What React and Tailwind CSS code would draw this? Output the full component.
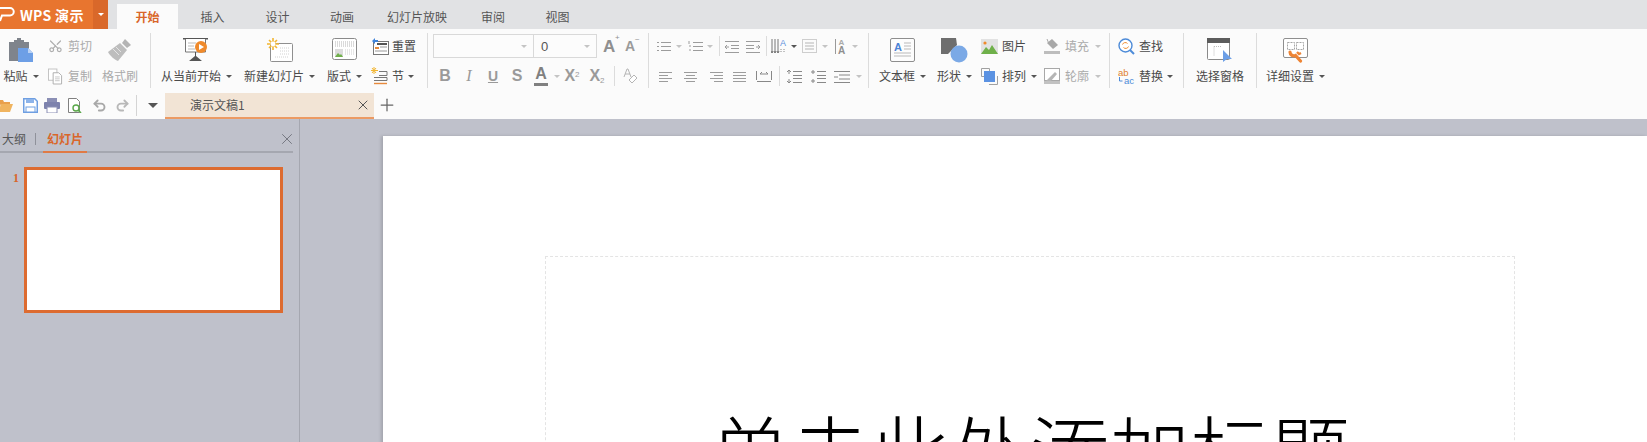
import { Plus, X, Scissors, Undo2, Redo2 } from 'lucide-react';

const CJK = { fontFamily: '"Noto Sans CJK SC", "Noto Sans", sans-serif' };
const SANS = { fontFamily: '"Liberation Sans", sans-serif' };

function Caret({ dim, className = '' }) {
  return (
    <span
      className={`inline-block w-0 h-0 border-x-[3px] border-x-transparent border-t-[3px] shrink-0 ${dim ? 'border-t-[#c4c4c4]' : 'border-t-[#555555]'} ${className}`}
    />
  );
}

function Sep() {
  return <div className="w-px h-[55px] mt-[4px] bg-[#dcdcdc] shrink-0" />;
}

function MiniSep({ className = '' }) {
  return <div className={`w-px h-[20px] bg-[#dcdcdc] shrink-0 ${className}`} />;
}

function Large({ icon, label, caret, className = '' }) {
  return (
    <div className={`flex flex-col items-center shrink-0 h-[56px] ${className}`}>
      <div className="h-[30px] pt-[5px] flex justify-center">{icon}</div>
      <div className="h-[26px] flex items-center whitespace-nowrap text-[#4a4a4a]">
        <span>{label}</span>
        {caret && <Caret className="ml-[5px]" />}
      </div>
    </div>
  );
}

function Small({ icon, label, caret, dim, gap = 'gap-[4px]' }) {
  return (
    <div className={`h-[26px] flex items-center whitespace-nowrap ${gap} ${dim ? 'text-[#aaaaaa]' : 'text-[#4a4a4a]'}`}>
      {icon}
      <span>{label}</span>
      {caret && <Caret dim={dim} className="ml-[1px]" />}
    </div>
  );
}

function Row({ children, className = '' }) {
  return <div className={`h-[26px] flex items-center ${className}`}>{children}</div>;
}

function Cell({ children, className = 'w-[24px]' }) {
  return <div className={`flex items-center justify-center shrink-0 ${className}`}>{children}</div>;
}

/* large ribbon icons */
const PasteIcon = () => (
  <svg width="26" height="24" viewBox="0 0 26 24" className="block">
    <path d="M1 4h5V2h3V0h4v2h3v2h5v9H10v10H1z" fill="#7f848c" />
    <path d="M10 10h10l5 5v9H10z" fill="#6d9fe6" />
    <path d="M20 10l5 5h-5z" fill="#b9d2f5" />
  </svg>
);

const BrushIcon = () => (
  <svg width="26" height="24" viewBox="0 0 26 24" className="block">
    <path d="M18 1l6 6-4 3-5-5z" fill="#b4b4b4" />
    <path d="M13 5l7 7-9 11c-3-1-8-5-10-9z" fill="#bdbdbd" />
    <path d="M6 11l6 6M9 9l5 5" stroke="#e4e4e4" strokeWidth="1" />
  </svg>
);

const PresentIcon = () => (
  <svg width="27" height="24" viewBox="0 0 27 24" className="block">
    <path d="M0 .5h25" stroke="#555" strokeWidth="2" />
    <path d="M2.5 1v13h20V1" fill="#fff" stroke="#777" />
    <path d="M5 5h8M5 8h6M5 11h7" stroke="#bbb" />
    <circle cx="18" cy="9" r="6" fill="#ef8a2c" />
    <path d="M16 6l5 3-5 3z" fill="#fff" />
    <path d="M12 14v4l-6 5h13l-6-5v-4z" fill="#555" />
  </svg>
);

const NewSlideIcon = () => (
  <svg width="26" height="24" viewBox="0 0 26 24" className="block">
    <rect x="3.5" y="5.5" width="22" height="18" rx="1" fill="#fff" stroke="#8f8f8f" />
    <path d="M13 10h9M13 13h9M13 16h9M8 19h14" stroke="#d2d2d2" strokeDasharray="1 1" />
    <path d="M6 0v12M0 6h12M2 2l8 8M10 2l-8 8" stroke="#f2b632" strokeWidth="1.6" />
    <circle cx="6" cy="6" r="2.4" fill="#fff" />
  </svg>
);

const LayoutIcon = () => (
  <svg width="25" height="23" viewBox="0 0 25 23" className="block">
    <rect x="0.5" y="0.5" width="24" height="21" rx="2" fill="#fff" stroke="#8a8a8a" />
    <path d="M3 4h19M3 6h19M3 8h19" stroke="#b5b5b5" strokeDasharray="1 1" />
    <path d="M13 12h9M13 14h9M13 16h9" stroke="#cfcfcf" strokeDasharray="1 1" />
    <rect x="3" y="11" width="8" height="8" fill="#dcdcdc" />
    <path d="M3 19l3-4 2 2 1-1 2 3z" fill="#6fb04a" />
  </svg>
);

const TextBoxIcon = () => (
  <svg width="25" height="24" viewBox="0 0 25 24" className="block">
    <rect x="0.5" y="0.5" width="24" height="23" rx="1.5" fill="#fdfdfd" stroke="#8e8e8e" />
    <text x="4" y="13" fontSize="11" fontWeight="700" fill="#4d84d6" fontFamily="Liberation Sans, sans-serif">A</text>
    <path d="M14 5h7M14 8h7M14 11h7M4 15h17M4 18h17" stroke="#b9b9b9" />
  </svg>
);

const ShapeIcon = () => (
  <svg width="27" height="25" viewBox="0 0 27 25" className="block">
    <path d="M0 0h15l1 7-9 9H0z" fill="#6e6e6e" />
    <circle cx="18" cy="16" r="8.5" fill="#7ba9e6" />
  </svg>
);

const PaneIcon = () => (
  <svg width="26" height="24" viewBox="0 0 26 24" className="block">
    <rect x="0.5" y="0.5" width="22" height="21" rx="1" fill="#fff" stroke="#8a8a8a" />
    <rect x="0" y="0" width="23" height="5" fill="#5c5c5c" />
    <path d="M7 8.5h8M7 8.5v10" stroke="#bdbdbd" strokeDasharray="1 1" />
    <path d="M16 12l9 9-5 0-4 3z" fill="#6d9fe6" />
  </svg>
);

const SettingsIcon = () => (
  <svg width="26" height="25" viewBox="0 0 26 25" className="block">
    <rect x="0.5" y="0.5" width="24" height="19" rx="1.5" fill="#fff" stroke="#8f8f8f" />
    <rect x="4.5" y="4.5" width="7" height="7" fill="#fff" stroke="#a5a5a5" strokeDasharray="2 1" />
    <rect x="13.5" y="4.5" width="7" height="7" fill="#fff" stroke="#a5a5a5" strokeDasharray="2 1" />
    <path d="M7 14c0 3 3 4.500 5.500 3.500l5 5.500" fill="none" stroke="#ee8434" strokeWidth="3.200" strokeLinecap="round" />
    <path d="M14 14l2 2 2-1" fill="none" stroke="#ee8434" strokeWidth="2.400" />
  </svg>
);

/* small ribbon icons */
const CopyIcon = () => (
  <svg width="16" height="17" viewBox="0 0 16 17" className="block">
    <rect x="0.5" y="0.5" width="9" height="12" fill="#fff" stroke="#c0c0c0" />
    <path d="M5.5 4.5h6l3 3v9h-9z" fill="#fff" stroke="#adadad" />
    <path d="M7.5 9h5M7.5 11h5M7.5 13h5" stroke="#c6c6c6" />
  </svg>
);

const ResetIcon = () => (
  <svg width="18" height="17" viewBox="0 0 18 17" className="block">
    <rect x="2.5" y="3.5" width="15" height="13" fill="#fff" stroke="#777" />
    <rect x="6" y="5" width="10" height="2" fill="#555" />
    <rect x="4" y="9" width="4" height="2" fill="#e78a3c" />
    <path d="M9 9h7M4 13h12" stroke="#999" />
    <path d="M4 0L1 3l3 3V4h3V2H4z" fill="#3f83d9" />
  </svg>
);

const SectionIcon = () => (
  <svg width="18" height="18" viewBox="0 0 18 18" className="block">
    <path d="M3 0v7M0 3.5h7M1 1l4 5M5 1L1 6" stroke="#f2b632" />
    <path d="M8 4.500h8v4H8M8 8.500h8" fill="none" stroke="#777" />
    <path d="M3 10.500h13v3H3" fill="none" stroke="#777" />
    <path d="M3 16.500h13" stroke="#e78a3c" strokeWidth="1.400" />
  </svg>
);

const Lines = ({ w = 13, d, color = '#9c9c9c' }) => (
  <svg width={w} height="15" viewBox={`0 0 ${w} 15`} className="block">
    <path d={d} stroke={color} fill="none" />
  </svg>
);

const PictureIcon = () => (
  <svg width="17" height="15" viewBox="0 0 17 15" className="block">
    <rect x="0" y="0" width="17" height="15" fill="#e2e2e2" />
    <circle cx="4" cy="4" r="1.600" fill="#ef8a2c" />
    <path d="M0 15l5-7 3 3 3-5 6 9z" fill="#6fb04a" />
  </svg>
);

const ArrangeIcon = () => (
  <svg width="17" height="17" viewBox="0 0 17 17" className="block">
    <path d="M0.500 0.500h8v3h-5v5h-3zM16.500 8v8.500H8" fill="none" stroke="#a0a0a0" />
    <rect x="3" y="3" width="11" height="11" fill="#5b92e2" />
  </svg>
);

const FillIcon = () => (
  <svg width="16" height="16" viewBox="0 0 16 16" className="block">
    <path d="M3 5l5-4 6 6-5 4z" fill="#a8a8a8" />
    <path d="M3 1l2 5" stroke="#a8a8a8" />
    <rect x="0" y="13" width="16" height="3" fill="#bdbdbd" />
  </svg>
);

const OutlineIcon = () => (
  <svg width="16" height="16" viewBox="0 0 16 16" className="block">
    <rect x="0.500" y="0.500" width="15" height="12" fill="#fff" stroke="#a8a8a8" />
    <path d="M2 13l9-9 2 2-6 7z" fill="#b5b5b5" />
    <rect x="0" y="13" width="16" height="3" fill="#c2c2c2" />
  </svg>
);

const FindIcon = () => (
  <svg width="17" height="17" viewBox="0 0 17 17" className="block">
    <circle cx="7.500" cy="7.500" r="6.500" fill="#fff" stroke="#4d8bd8" strokeWidth="1.400" />
    <path d="M4.500 6.500a3 3 0 015-1M10.500 8.500a3 3 0 01-5 1" stroke="#ef8a2c" fill="none" />
    <path d="M12 12l4 4" stroke="#4d8bd8" strokeWidth="2" />
  </svg>
);

const ReplaceIcon = () => (
  <svg width="18" height="17" viewBox="0 0 18 17" className="block">
    <text x="0" y="7.500" fontSize="9.500" fill="#e0812e" fontFamily="Liberation Sans, sans-serif">ab</text>
    <text x="6" y="16" fontSize="9.500" fill="#4d8bd8" fontFamily="Liberation Sans, sans-serif">ac</text>
    <path d="M1.500 9v4h3" stroke="#4d8bd8" fill="none" />
  </svg>
);

/* quick access */
const FolderIcon = () => (
  <svg width="15" height="13" viewBox="0 0 15 13" className="block shrink-0">
    <path d="M0 1h5l1 2h6v2H3L0 11z" fill="#e9a04c" />
    <path d="M3 5h12l-3 8H0z" fill="#f0b45f" />
  </svg>
);

const SaveIcon = () => (
  <svg width="15" height="15" viewBox="0 0 15 15" className="block">
    <path d="M.75.75h11l2.500 2.500v11H.75z" fill="#fff" stroke="#6f9fe2" strokeWidth="1.500" />
    <rect x="3" y="1" width="8" height="4" fill="#8db4ea" />
    <rect x="3" y="9" width="9" height="5" fill="#fff" stroke="#6f9fe2" />
  </svg>
);

const PrintIcon = () => (
  <svg width="16" height="15" viewBox="0 0 16 15" className="block">
    <rect x="3" y="0" width="10" height="4" fill="#8b8fb5" />
    <rect x="0" y="4" width="16" height="7" rx="1" fill="#7d82ad" />
    <rect x="3" y="9" width="10" height="6" fill="#fff" stroke="#8b8fb5" />
  </svg>
);

const PreviewIcon = () => (
  <svg width="15" height="15" viewBox="0 0 15 15" className="block">
    <path d="M.5.5h8l3 3v11H.5z" fill="#fff" stroke="#808080" />
    <circle cx="8" cy="10" r="3" fill="#fff" stroke="#5aa84a" strokeWidth="1.400" />
    <path d="M10 12l3 3" stroke="#5aa84a" strokeWidth="1.600" />
  </svg>
);

export default function App() {
  const tabs = [
    ['插入', 'w-[65px]'],
    ['设计', 'w-[65px]'],
    ['动画', 'w-[64px]'],
    ['幻灯片放映', 'w-[86px]'],
    ['审阅', 'w-[66px]'],
    ['视图', 'w-[63px]'],
  ];

  return (
    <div className="w-[1647px] h-[442px] overflow-hidden flex flex-col bg-[#bfc1cb] text-[12px] leading-none" style={CJK}>
      {/* title bar + tabs */}
      <div className="h-[29px] bg-[#e1e2e4] flex shrink-0">
        <div className="w-[93px] h-[29px] bg-[#e8752f] flex items-center text-white overflow-hidden">
          <svg width="16" height="17" viewBox="0 0 16 17" className="block shrink-0">
            <path d="M0 2h10a3.500 3.500 0 010 7.500H2L0 15" fill="none" stroke="#fff" strokeWidth="2" />
          </svg>
          <span className="ml-[4px] text-[14px] tracking-[0.3px] font-bold whitespace-nowrap">WPS 演示</span>
        </div>
        <div className="w-[15px] h-[29px] bg-[#d9682a] flex items-center justify-center">
          <Caret className="border-t-white!" />
        </div>
        <div className="ml-[9px] mt-[4px] w-[61px] h-[25px] bg-[#fbfbfb] flex items-center justify-center text-[#d9662a] font-bold">
          开始
        </div>
        <div className="flex">
          <div className="w-[2px]" />
          {tabs.map(([t, w]) => (
            <div key={t} className={`${w} pt-[4px] flex items-center justify-center text-[#555555]`}>{t}</div>
          ))}
        </div>
      </div>

      {/* ribbon */}
      <div className="h-[63px] bg-[#fbfbfb] flex shrink-0">
        <div className="w-[150px] mt-[4px] flex shrink-0">
          <Large className="w-[42px]" icon={<PasteIcon />} label="粘贴" caret />
          <div className="ml-[6px] w-[44px] h-[56px] flex flex-col justify-between text-[#aaaaaa]">
            <Small dim gap="gap-[5px]" icon={<Scissors size={16} color="#aeaeae" className="-rotate-90" />} label="剪切" />
            <Small dim gap="gap-[5px]" icon={<CopyIcon />} label="复制" />
          </div>
          <div className="ml-[10px] w-[36px] text-[#aaaaaa] flex flex-col items-center h-[56px]">
            <div className="h-[30px] pt-[5px]"><BrushIcon /></div>
            <div className="h-[26px] flex items-center whitespace-nowrap">格式刷</div>
          </div>
        </div>
        <Sep />

        <div className="w-[276px] mt-[4px] pl-[10px] flex shrink-0">
          <Large className="w-[71px]" icon={<PresentIcon />} label="从当前开始" caret />
          <Large className="ml-[12px] w-[71px]" icon={<NewSlideIcon />} label="新建幻灯片" caret />
          <Large className="ml-[12px] w-[35px]" icon={<LayoutIcon />} label="版式" caret />
          <div className="ml-[9px] h-[56px] flex flex-col justify-between">
            <Small gap="gap-[3px]" icon={<ResetIcon />} label="重置" />
            <Small gap="gap-[3px]" icon={<SectionIcon />} label="节" caret />
          </div>
        </div>
        <Sep />

        <div className="w-[220px] mt-[4px] h-[56px] flex flex-col justify-between shrink-0">
          <Row className="pl-[5px]">
            <div className="w-[164px] h-[24px] border border-[#d9d9d9] bg-[#fcfcfc] flex">
              <div className="w-[100px] border-r border-[#d9d9d9] flex items-center justify-end pr-[6px]"><Caret dim /></div>
              <div className="flex-1 flex items-center pl-[7px] pr-[6px] justify-between text-[#555555]" style={SANS}>
                <span className="text-[13px]">0</span>
                <Caret dim />
              </div>
            </div>
            <div className="ml-[6px] w-[17px] text-[#8f8f8f] text-[17px] font-bold relative" style={SANS}>
              A<span className="absolute -top-[4px] left-[12px] text-[8px] font-normal">+</span>
            </div>
            <div className="ml-[5px] w-[16px] text-[#9a9a9a] text-[14px] font-bold relative" style={SANS}>
              A<span className="absolute -top-[3px] left-[10px] text-[8px] font-normal">−</span>
            </div>
          </Row>
          <Row className="pl-[5px] text-[#9a9a9a] text-[16px]">
            <Cell><span className="font-bold" style={SANS}>B</span></Cell>
            <Cell><span className="italic" style={{ fontFamily: '"Liberation Serif", serif' }}>I</span></Cell>
            <Cell><span className="underline font-bold text-[14px]" style={SANS}>U</span></Cell>
            <Cell><span className="font-bold" style={SANS}>S</span></Cell>
            <Cell>
              <span className="font-bold border-b-[3px] border-[#808080] px-[1px] pb-[1px] text-[#808080]" style={SANS}>A</span>
            </Cell>
            <Caret dim className="ml-[1px]" />
            <Cell className="w-[24px]">
              <span className="font-bold text-[16px]" style={SANS}>X<sup className="text-[8px] font-normal">2</sup></span>
            </Cell>
            <Cell className="w-[24px] ml-[1px]">
              <span className="font-bold text-[16px]" style={SANS}>X<sub className="text-[8px] font-normal">2</sub></span>
            </Cell>
            <MiniSep className="ml-[5px]" />
            <Cell className="w-[24px] ml-[3px]">
              <svg width="15" height="16" viewBox="0 0 15 16" className="block">
                <path d="M1 9L4 1h1l3 8M2 6h5" fill="none" stroke="#b5b5b5" />
                <path d="M6 12l5-5 3 3-5 5z" fill="#fff" stroke="#b5b5b5" />
              </svg>
            </Cell>
          </Row>
        </div>
        <Sep />

        <div className="w-[219px] mt-[4px] h-[56px] flex flex-col justify-between shrink-0">
          <Row className="pl-[8px]">
            <Lines w={14} d="M0 3.500h2M0 7.500h2M0 11.500h2M4 3.500h10M4 7.500h10M4 11.500h10" />
            <Caret dim className="ml-[5px]" />
            <div className="ml-[6px]"><Lines w={15} d="M1 2v3M1 7h2M1 11h2M5 3.500h10M5 7.500h10M5 11.500h10" /></div>
            <Caret dim className="ml-[4px]" />
            <MiniSep className="ml-[6px]" />
            <div className="ml-[5px]"><Lines w={14} d="M0 2.500h14M6 6.500h8M6 9.500h8M0 13.500h14M4 8H0M2 6L0 8l2 2" /></div>
            <div className="ml-[7px]"><Lines w={14} d="M0 2.500h14M0 6.500h8M0 9.500h8M0 13.500h14M10 8h4M12 6l2 2-2 2" /></div>
            <MiniSep className="ml-[6px]" />
            <div className="ml-[4px]">
              <svg width="16" height="16" viewBox="0 0 16 16" className="block">
                <path d="M1 1v14M4 1v14M7 1v14M0 13l1 2 1-2M3 13l1 2 1-2M6 13l1 2 1-2" stroke="#777" fill="none" />
                <text x="9" y="8" fontSize="9" fill="#5b8fdc" fontFamily="Liberation Sans, sans-serif">A</text>
                <path d="M10 11v4M13 11v4" stroke="#888" strokeDasharray="1 1" />
              </svg>
            </div>
            <Caret className="ml-[4px]" />
            <div className="ml-[5px]">
              <svg width="15" height="14" viewBox="0 0 15 14" className="block">
                <rect x="0.500" y="0.500" width="14" height="13" fill="none" stroke="#a0a0a0" strokeDasharray="1 1" />
                <path d="M3 4h9M3 7h9M3 10h9" stroke="#b5b5b5" />
              </svg>
            </div>
            <Caret dim className="ml-[5px]" />
            <div className="ml-[7px] flex items-center">
              <svg width="11" height="17" viewBox="0 0 11 17" className="block">
                <path d="M.5 1v15" stroke="#999" />
                <text x="3.500" y="7" fontSize="8" fontWeight="700" fill="#aaa" fontFamily="Liberation Sans, sans-serif">A</text>
                <text x="3" y="16" fontSize="10" fontWeight="700" fill="#8f8f8f" fontFamily="Liberation Sans, sans-serif">A</text>
              </svg>
            </div>
            <Caret dim className="ml-[6px]" />
          </Row>
          <Row className="pl-[10px]">
            <Lines w={13} d="M0 3.500h13M0 6.500h9M0 9.500h13M0 12.500h9" />
            <div className="ml-[12px]"><Lines w={13} d="M0 3.500h13M2 6.500h9M0 9.500h13M2 12.500h9" /></div>
            <div className="ml-[13px]"><Lines w={13} d="M0 3.500h13M4 6.500h9M0 9.500h13M4 12.500h9" /></div>
            <div className="ml-[10px]"><Lines w={13} d="M0 3.500h13M0 6.500h13M0 9.500h13M0 12.500h13" /></div>
            <div className="ml-[10px]"><Lines w={16} d="M.5 2v9M15.500 2v9M4 5h8M4 5l2-2M12 5l-2-2M1 12.500h14" color="#888" /></div>
            <MiniSep className="ml-[7px]" />
            <div className="ml-[6px]"><Lines w={16} d="M3 1v4M1 3l2-2 2 2M3 14v-4M1 12l2 2 2-2M7 2.500h9M7 6.500h9M7 9.500h9M7 13.500h9" color="#888" /></div>
            <div className="ml-[8px]"><Lines w={16} d="M3 1v4M1 3h4M3 10v4M1 12h4M7 2.500h9M7 6.500h9M7 9.500h9M7 13.500h9" color="#888" /></div>
            <div className="ml-[8px]"><Lines w={16} d="M0 2.500h16M5 6h11M0 8h4M5 10h11M0 13.500h16" color="#888" /></div>
            <Caret dim className="ml-[6px]" />
          </Row>
        </div>
        <Sep />

        <div className="w-[240px] mt-[4px] pl-[10px] flex shrink-0">
          <Large className="w-[47px]" icon={<TextBoxIcon />} label="文本框" caret />
          <Large className="ml-[11px] w-[35px]" icon={<ShapeIcon />} label="形状" caret />
          <div className="ml-[9px] w-[56px] h-[56px] flex flex-col justify-between">
            <Small icon={<PictureIcon />} label="图片" />
            <Small icon={<ArrangeIcon />} label="排列" caret />
          </div>
          <div className="ml-[7px] h-[56px] flex flex-col justify-between">
            <Small dim gap="gap-[5px]" icon={<FillIcon />} label="填充" caret />
            <Small dim gap="gap-[5px]" icon={<OutlineIcon />} label="轮廓" caret />
          </div>
        </div>
        <Sep />

        <div className="w-[73px] mt-[4px] pl-[8px] h-[56px] flex flex-col justify-between shrink-0">
          <Small icon={<FindIcon />} label="查找" />
          <Small gap="gap-[3px]" icon={<ReplaceIcon />} label="替换" caret />
        </div>
        <Sep />

        <div className="w-[72px] mt-[4px] flex justify-center shrink-0">
          <Large icon={<PaneIcon />} label="选择窗格" />
        </div>
        <Sep />

        <div className="mt-[4px] pl-[9px] flex">
          <Large icon={<SettingsIcon />} label="详细设置" caret />
        </div>
      </div>

      {/* quick access + document tabs */}
      <div className="h-[27px] bg-[#fbfbfb] flex items-start shrink-0">
        <div className="h-[27px] flex items-center -ml-[2px]">
          <FolderIcon />
          <div className="ml-[10px]"><SaveIcon /></div>
          <div className="ml-[6px]"><PrintIcon /></div>
          <div className="ml-[8px]"><PreviewIcon /></div>
          <Undo2 size={15} strokeWidth={3} color="#a8a8a8" className="ml-[9px]" />
          <Redo2 size={15} strokeWidth={3} color="#b8b8b8" className="ml-[8px]" />
          <div className="ml-[6px] w-px h-[21px] bg-[#d4d4d4]" />
          <span className="ml-[11px] w-0 h-0 border-x-[5px] border-x-transparent border-t-[5px] border-t-[#555555]" />
        </div>
        <div className="ml-[7px] mt-px w-[209px] h-[26px] bg-[#f2e4d5] border-b-2 border-[#ec9a63] flex items-center pl-[25px] pr-[3px] justify-between text-[#555555]">
          <span>演示文稿1</span>
          <X size={16} strokeWidth={1.5} color="#555555" />
        </div>
        <Plus size={20} strokeWidth={1.5} color="#666666" className="ml-[3px] mt-[3px]" />
      </div>

      {/* workspace */}
      <div className="flex-1 flex min-h-0">
        <div className="w-[300px] border-r border-[#a5a7b0] pt-[13px] shrink-0">
          <div className="w-[293px] h-[21px] border-b-2 border-[#a5a7b0] flex items-start relative">
            <span className="ml-[2px] mt-[1px] text-[#555555]">大纲</span>
            <span className="ml-[9px] mt-[1px] w-px h-[12px] bg-[#8f919a]" />
            <span className="ml-[7px] w-[44px] h-[21px] pt-[1px] text-center border-b-2 border-[#e07a45] text-[#d9662a] font-bold">幻灯片</span>
            <X size={18} strokeWidth={1} color="#5e606a" className="absolute -right-[3px] -top-[2px]" />
          </div>
          <div className="flex mt-[14px]">
            <span className="ml-[13px] w-[11px] mt-[5px] text-[#d9662a] font-bold text-[12px]" style={{ fontFamily: '"Liberation Serif", serif' }}>1</span>
            <div className="w-[259px] h-[146px] bg-white border-[3px] border-[#dd6b30]" />
          </div>
        </div>
        <div className="flex-1 pl-[83px] pt-[17px] min-w-0">
          <div className="h-[400px] bg-white pl-[162px] pt-[120px] shadow-[-2px_0_3px_rgba(0,0,0,0.15)]">
            <div className="w-[970px] h-[300px] border border-dashed border-[#e4e4e4] text-center text-black text-[80px] font-light leading-[80px] pt-[151px] whitespace-nowrap">
              单击此处添加标题
            </div>
          </div>
        </div>
      </div>
    </div>
  );
}
